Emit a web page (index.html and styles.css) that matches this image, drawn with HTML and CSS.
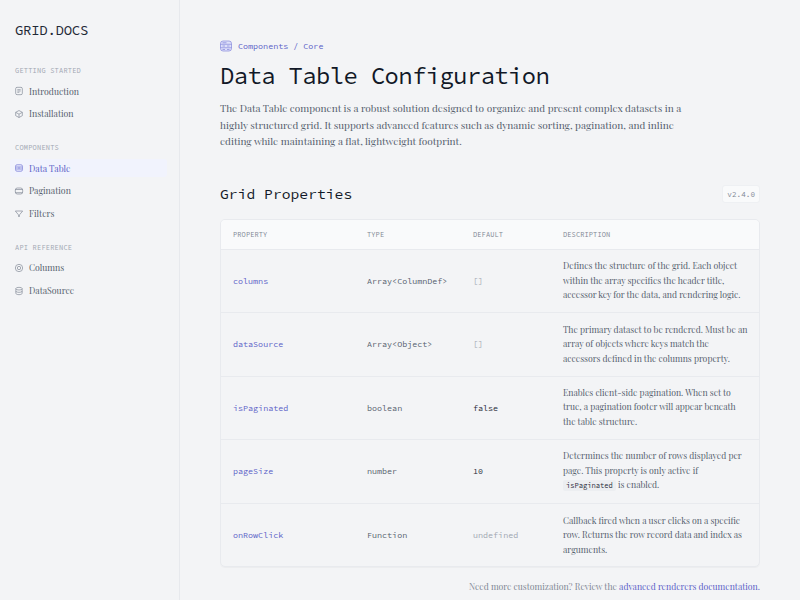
FILE: index.html
```html
<!DOCTYPE html>
<html lang="en">
<head>
    <meta charset="UTF-8">
    <title>Data Table Configuration</title>
    <link rel="stylesheet" href="styles.css">
</head>
<body>
    <div class="layout">
        <aside class="sidebar">
            <div class="logo">GRID.DOCS</div>

            <div class="nav-group">
                <div class="nav-title">GETTING STARTED</div>
                <a class="nav-item">
                    <svg class="icon" viewBox="0 0 24 24"><rect x="2" y="1" width="20" height="22" rx="4"/><path d="M7 8h10M7 12h10M7 16h6"/></svg>
                    Introduction
                </a>
                <a class="nav-item">
                    <svg class="icon" viewBox="0 0 24 24"><path d="M12 1.500 22 7v10l-10 5.500L2 17V7z"/><path d="M2 7l10 5.500L22 7M12 12.500v10"/></svg>
                    Installation
                </a>
            </div>

            <div class="nav-group">
                <div class="nav-title">COMPONENTS</div>
                <a class="nav-item active">
                    <svg class="icon" viewBox="0 0 24 24"><rect x="1.500" y="2" width="21" height="20" rx="5" class="icon-fill"/><path d="M1.500 9h21M1.500 15h21M12 9v6"/></svg>
                    Data Table
                </a>
                <a class="nav-item">
                    <svg class="icon" viewBox="0 0 24 24"><rect x="1" y="3" width="22" height="18" rx="6"/><path d="M1 7.500h22M1 17h22"/></svg>
                    Pagination
                </a>
                <a class="nav-item">
                    <svg class="icon" viewBox="0 0 24 24"><path d="M1 3h22l-9 11-2 7-2-7z"/></svg>
                    Filters
                </a>
            </div>

            <div class="nav-group">
                <div class="nav-title">API REFERENCE</div>
                <a class="nav-item">
                    <svg class="icon" viewBox="0 0 24 24"><circle cx="12" cy="12" r="11"/><circle cx="12" cy="12" r="5"/></svg>
                    Columns
                </a>
                <a class="nav-item">
                    <svg class="icon" viewBox="0 0 24 24"><ellipse cx="12" cy="5" rx="9.500" ry="4"/><path d="M2.500 5v14c0 2.200 4.300 4 9.500 4s9.500-1.800 9.500-4V5M2.500 12c0 2.200 4.300 4 9.500 4s9.500-1.800 9.500-4"/></svg>
                    DataSource
                </a>
            </div>
        </aside>

        <main class="main">
            <div class="breadcrumb">
                <svg class="crumb-icon" viewBox="0 0 24 24"><rect x="1" y="2" width="22" height="20" rx="5" class="icon-fill"/><path d="M1 8.500h22M1 15.500h22M5 5.500h8M5 12h5M14 12h5M5 19h5M14 19h5"/></svg>
                <span>Components / Core</span>
            </div>
            <h1>Data Table Configuration</h1>
            <p class="intro">The Data Table component is a robust solution designed to organize and present complex datasets in a highly structured grid. It supports advanced features such as dynamic sorting, pagination, and inline editing while maintaining a flat, lightweight footprint.</p>

            <div class="section-head">
                <h2>Grid Properties</h2>
                <span class="version">v2.4.0</span>
            </div>

            <div class="table-wrap">
                <table>
                    <thead>
                        <tr>
                            <th class="col-prop">PROPERTY</th>
                            <th class="col-type">TYPE</th>
                            <th class="col-def">DEFAULT</th>
                            <th>DESCRIPTION</th>
                        </tr>
                    </thead>
                    <tbody>
                        <tr>
                            <td class="prop">columns</td>
                            <td class="type">Array&lt;ColumnDef&gt;</td>
                            <td class="muted">[]</td>
                            <td class="desc">Defines the structure of the grid. Each object within the array specifies the header title, accessor key for the data, and rendering logic.</td>
                        </tr>
                        <tr>
                            <td class="prop">dataSource</td>
                            <td class="type">Array&lt;Object&gt;</td>
                            <td class="muted">[]</td>
                            <td class="desc">The primary dataset to be rendered. Must be an array of objects where keys match the accessors defined in the columns property.</td>
                        </tr>
                        <tr>
                            <td class="prop">isPaginated</td>
                            <td class="type">boolean</td>
                            <td class="val">false</td>
                            <td class="desc">Enables client-side pagination. When set to true, a pagination footer will appear beneath the table structure.</td>
                        </tr>
                        <tr>
                            <td class="prop">pageSize</td>
                            <td class="type">number</td>
                            <td class="val">10</td>
                            <td class="desc">Determines the number of rows displayed per page. This property is only active if <code>isPaginated</code> is enabled.</td>
                        </tr>
                        <tr>
                            <td class="prop">onRowClick</td>
                            <td class="type">Function</td>
                            <td class="muted">undefined</td>
                            <td class="desc">Callback fired when a user clicks on a specific row. Returns the row record data and index as arguments.</td>
                        </tr>
                    </tbody>
                </table>
            </div>

            <p class="foot">Need more customization? Review the <a href="#">advanced renderers documentation.</a></p>
        </main>
    </div>
</body>
</html>
```

FILE: styles.css
```css
* {
    margin: 0;
    padding: 0;
    box-sizing: border-box;
}

html, body {
    height: 600px;
    overflow: hidden;
}

body {
    font-family: 'Playfair Display', 'Liberation Serif', serif;
    background: #f3f4f6;
    color: #4b5563;
}

.layout {
    display: flex;
    height: 600px;
}

.sidebar {
    width: 180px;
    flex-shrink: 0;
    border-right: 1px solid #e7e9ed;
    padding: 20px 12px 0 10px;
}

.logo {
    font-family: 'Source Code Pro', 'DejaVu Sans Mono', monospace;
    font-size: 14px;
    letter-spacing: -0.02em;
    line-height: 20px;
    color: #1f2937;
    padding-left: 5px;
    margin-bottom: 26px;
}

.nav-group {
    margin-bottom: 20.300px;
}

.nav-title {
    font-family: 'Source Code Pro', 'DejaVu Sans Mono', monospace;
    font-size: 7px;
    line-height: 10px;
    letter-spacing: 0.2px;
    color: #a0a6b1;
    padding-left: 5px;
    margin-bottom: 6px;
}

.nav-item {
    display: flex;
    align-items: center;
    gap: 6px;
    height: 18px;
    margin-bottom: 4.750px;
    padding-left: 5px;
    font-size: 8.750px;
    color: #565f6e;
}

.nav-item.active {
    background: #f1f3fd;
    color: #5b5fc7;
    border-radius: 3px;
}

.icon {
    width: 8px;
    height: 8px;
    flex-shrink: 0;
    fill: none;
    stroke: #7f8794;
    stroke-width: 2;
    overflow: visible;
}

.active .icon {
    stroke: #7c7fd8;
}

.icon-fill {
    fill: #dfe1fa;
}

.main {
    flex: 1;
    padding: 40px 40px 0;
    min-width: 0;
}

.breadcrumb {
    display: flex;
    align-items: center;
    gap: 6px;
    font-family: 'Source Code Pro', 'DejaVu Sans Mono', monospace;
    font-size: 8.400px;
    line-height: 12px;
    color: #5b5fc7;
    margin-bottom: 8px;
}

.crumb-icon {
    width: 12px;
    height: 12px;
    fill: none;
    stroke: #7c7fd8;
    stroke-width: 1.300;
}

h1 {
    font-family: 'Source Code Pro', 'DejaVu Sans Mono', monospace;
    font-size: 23.800px;
    font-weight: 400;
    letter-spacing: -0.56px;
    line-height: 32px;
    color: #111827;
    margin-bottom: 8px;
}

.intro {
    font-size: 10.080px;
    line-height: 1.650;
    max-width: 476px;
    color: #565f6e;
    margin-bottom: 32px;
}

.section-head {
    display: flex;
    align-items: center;
    justify-content: space-between;
    margin-bottom: 13px;
}

h2 {
    font-family: 'Source Code Pro', 'DejaVu Sans Mono', monospace;
    font-size: 14.700px;
    font-weight: 400;
    line-height: 24px;
    color: #111827;
}

.version {
    font-family: 'Source Code Pro', 'DejaVu Sans Mono', monospace;
    font-size: 7.700px;
    line-height: 12px;
    color: #7f8794;
    background: #f9fafb;
    border: 1px solid #eef0f3;
    border-radius: 3px;
    padding: 2px 4px;
}

.table-wrap {
    border: 1px solid #e8eaee;
    border-radius: 5px;
    overflow: hidden;
    box-shadow: 0 1px 1px rgba(0, 0, 0, 0.03);
}

table {
    width: 100%;
    border-collapse: collapse;
    table-layout: fixed;
}

.col-prop { width: 134px; }
.col-type { width: 106px; }
.col-def { width: 90px; }

th {
    font-family: 'Source Code Pro', 'DejaVu Sans Mono', monospace;
    font-size: 7px;
    font-weight: 400;
    letter-spacing: 0.1px;
    text-align: left;
    color: #7f8794;
    background: #f9fafb;
    height: 29.500px;
    padding: 0 12px;
    border-bottom: 1px solid #e8eaee;
}

td {
    padding: 9.500px 12px;
    border-bottom: 1px solid #e8eaee;
    font-family: 'Source Code Pro', 'DejaVu Sans Mono', monospace;
    font-size: 8.400px;
}

tr:last-child td {
    border-bottom: none;
}

.prop { color: #5b5fc7; }
.type { color: #565f6e; }
.val { color: #1f2937; }
.muted { color: #a0a6b1; }

td.desc {
    font-family: 'Playfair Display', 'Liberation Serif', serif;
    font-size: 8.680px;
    line-height: 14.440px;
    padding-right: 11.300px;
    color: #565f6e;
}

code {
    font-family: 'Source Code Pro', 'DejaVu Sans Mono', monospace;
    font-size: 7.100px;
    background: #eceef1;
    border-radius: 2px;
    padding: 1px 3px;
    color: #1f2937;
}

.foot {
    font-size: 8.680px;
    line-height: 14px;
    text-align: right;
    margin-top: 13px;
    color: #7f8794;
}

.foot a {
    color: #5b5fc7;
    text-decoration: none;
}
```
